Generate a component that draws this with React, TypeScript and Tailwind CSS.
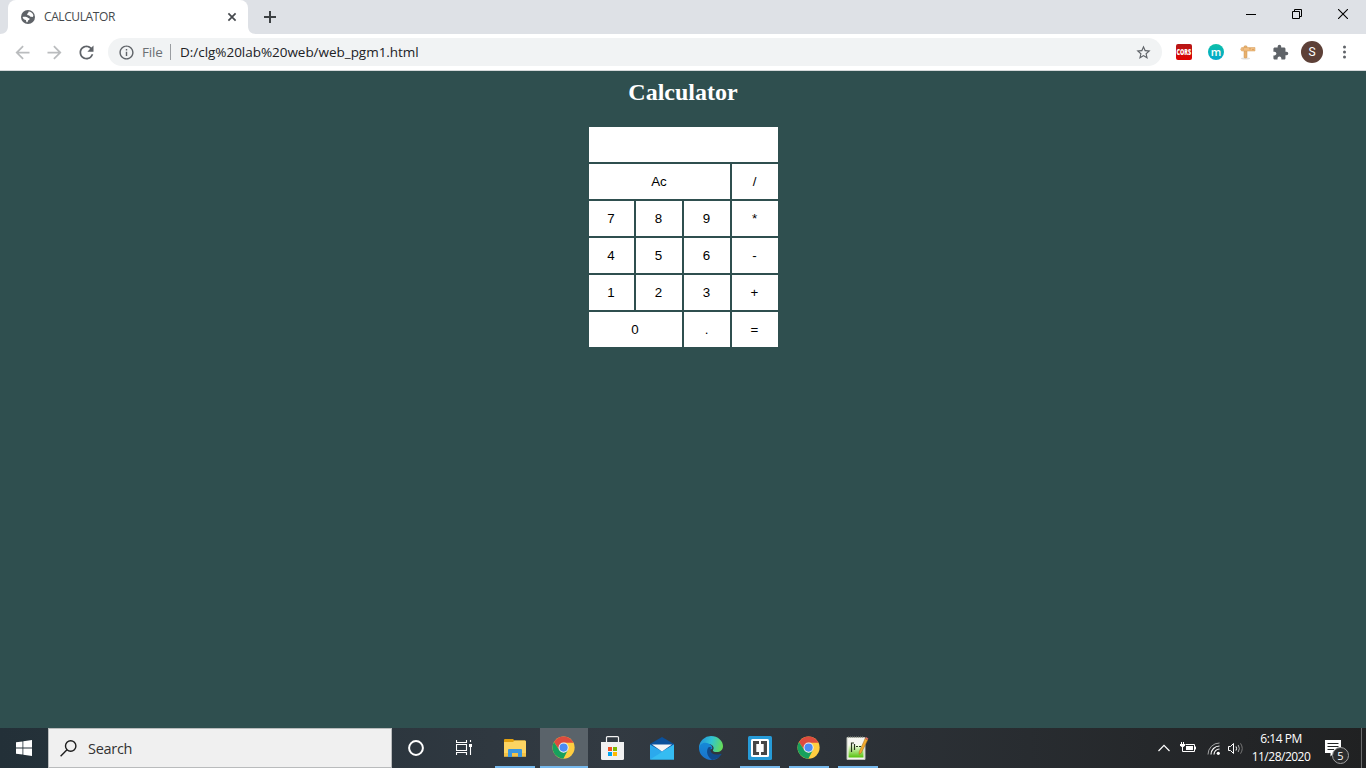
import type { ReactNode } from "react";
import { MdArrowBack, MdArrowForward, MdExtension, MdOutlineInfo, MdRefresh, MdStarBorder } from "react-icons/md";

const ui = "font-['Open_Sans','Noto_Sans',sans-serif]";

function Globe() {
  return (
    <svg width="14" height="14" viewBox="0 0 14 14">
      <circle cx="7" cy="7" r="7" fill="#5f6368" />
      <path d="M7.6 1.5 C9.6 1.5 11.6 2.8 12.3 5 C12.4 6 12.2 6.6 11.6 6.9 C10.4 7 9.2 6.8 8.8 6.1 C8.4 5.4 7.8 5.5 7 5.3 C6 5 6 4.2 6.5 3.6 C7 3 7.6 2.5 7.6 1.5Z" fill="#fff" />
      <path d="M1.6 6.9 C3.6 6.5 5.8 6.6 6.6 7.6 C7.2 8.4 8.7 8.1 8.7 9.1 C8.6 10.2 7.2 10 6.9 10.9 C6.8 11.6 6.4 12.3 5.6 12.2 C5 11.7 5.3 10.7 4.8 10.1 C3.7 9.6 1.8 8.9 1.6 6.9Z" fill="#fff" />
    </svg>
  );
}

function TabStrip() {
  return (
    <div className="flex h-[34px] bg-[#dee1e6]">
      <svg width="8" height="34" viewBox="0 0 8 34"><path d="M8 26V34H0C5 34 8 31 8 26Z" fill="#fff" /></svg>
      <div className="flex h-[34px] w-60 items-center rounded-t-lg bg-white pl-[13px] pr-[11px]">
        <Globe />
        <span className={`${ui} ml-[9px] flex-1 text-[12px] leading-4 tracking-[-0.4px] text-[#45494d]`}>CALCULATOR</span>
        <svg width="10" height="10" viewBox="0 0 10 10"><path d="M1.4 1.4L8.6 8.6M8.6 1.4L1.4 8.6" stroke="#45494d" strokeWidth="1.7" /></svg>
      </div>
      <svg width="8" height="34" viewBox="0 0 8 34"><path d="M0 26V34H8C3 34 0 31 0 26Z" fill="#fff" /></svg>
      <div className="flex w-7 items-center justify-center">
        <svg width="12" height="12" viewBox="0 0 12 12"><path d="M6 0V12M0 6H12" stroke="#3c4043" strokeWidth="2" /></svg>
      </div>
      <div className="ml-auto flex h-7">
        <div className="flex w-[46px] items-center justify-center">
          <svg width="10" height="10" viewBox="0 0 10 10"><path d="M0 5.5H10" stroke="#000" /></svg>
        </div>
        <div className="flex w-[46px] items-center justify-center">
          <svg width="10" height="10" viewBox="0 0 10 10" fill="none" stroke="#000"><path d="M.5 2.5H7.5V9.5H.5ZM2.5 2.5V.5H9.5V7.5H7.5" /></svg>
        </div>
        <div className="flex w-[46px] items-center justify-center">
          <svg width="10" height="10" viewBox="0 0 10 10"><path d="M0 0L10 10M10 0L0 10" stroke="#000" strokeWidth="1.1" /></svg>
        </div>
      </div>
    </div>
  );
}

function Slot({ children }: { children?: ReactNode }) {
  return <div className="flex w-8 items-center justify-center">{children}</div>;
}

function Toolbar() {
  return (
    <div className="flex h-[37px] border-b border-[#d5d8da] bg-white pl-[6px] pr-[6px]">
      <Slot><MdArrowBack size={21} color="#babcbe" /></Slot>
      <Slot><MdArrowForward size={21} color="#babcbe" /></Slot>
      <Slot><MdRefresh size={21} color="#5f6368" /></Slot>
      <div className={`${ui} ml-[6px] mt-1 flex h-7 flex-1 items-center rounded-full bg-[#f1f3f4] pl-[10px] pr-[10px] text-[13.5px]`}>
        <MdOutlineInfo size={17} color="#5f6368" />
        <span className="ml-[7px] w-[28px] tracking-[-0.2px] text-[#6b6f73]">File</span>
        <span className="h-4 w-px bg-[#9a9da1]" />
        <span className="ml-[9px] flex-1 pt-px tracking-[-0.03px] text-[#202124]">D:/clg%20lab%20web/web_pgm1.html</span>
        <MdStarBorder size={17} color="#5f6368" />
      </div>
      <div className="ml-[6px] flex">
        <Slot>
          <div className="flex h-4 w-4 items-center justify-center rounded-[2px] bg-linear-to-b from-[#b51616] to-[#e00000]">
            <span className="scale-x-[0.68] font-['Open_Sans',sans-serif] text-[8px] leading-none font-extrabold text-white">CORS</span>
          </div>
        </Slot>
        <Slot>
          <div className="flex h-4 w-4 items-center justify-center rounded-full bg-linear-to-b from-[#0fbfa6] to-[#08a8cc]">
            <span className="pb-[2px] font-['Open_Sans',sans-serif] text-[11px] leading-none font-semibold text-white">m</span>
          </div>
        </Slot>
        <Slot>
          <svg width="16" height="16" viewBox="0 0 16 16">
            <ellipse cx="5.5" cy="14.4" rx="4.5" ry="1" fill="#e2e0dd" />
            <path d="M4 2.2Q5.5 1.2 7 2.2V13.5Q5.5 14.5 4 13.5Z" fill="#e7b06d" stroke="#cf9550" strokeWidth=".5" />
            <path d="M1.6 3.5H15V7H1.6L.8 5.2Z" fill="#f1bd80" stroke="#d59c58" strokeWidth=".5" />
            <path d="M9 4.8H11M12 5.6H14M2.5 5H4" stroke="#c68d4c" strokeWidth=".6" />
          </svg>
        </Slot>
        <Slot><MdExtension size={17} color="#5f6368" /></Slot>
        <Slot>
          <div className="flex h-[22px] w-[22px] shrink-0 items-center justify-center rounded-full bg-[#5d4037]">
            <span className="font-[Roboto,sans-serif] text-[12px] leading-none text-white">S</span>
          </div>
        </Slot>
        <Slot>
          <svg width="4" height="14" viewBox="0 0 4 14" fill="#5f6368"><circle cx="2.5" cy="2" r="1.5" /><circle cx="2.5" cy="7" r="1.5" /><circle cx="2.5" cy="12" r="1.5" /></svg>
        </Slot>
      </div>
    </div>
  );
}

const keys: { label: string; span?: string }[] = [
  { label: "Ac", span: "col-span-3" },
  { label: "/" },
  { label: "7" }, { label: "8" }, { label: "9" }, { label: "*" },
  { label: "4" }, { label: "5" }, { label: "6" }, { label: "-" },
  { label: "1" }, { label: "2" }, { label: "3" }, { label: "+" },
  { label: "0", span: "col-span-2" },
  { label: "." },
  { label: "=" },
];

function Calculator() {
  return (
    <main className="flex flex-1 flex-col items-center bg-[#2f4f4f]">
      <h1 className="mt-[7px] font-['Liberation_Serif',serif] text-2xl leading-7 font-bold text-white">Calculator</h1>
      <div className="mt-[21px] ml-px grid auto-rows-[35px] grid-cols-[45px_46px_46px_46px] gap-[2px]">
        <input className="col-span-4 min-w-0 bg-white px-2 outline-none" readOnly />
        {keys.map((k) => (
          <button key={k.label} className={`${k.span ?? ""} bg-white pr-px font-['Liberation_Sans',sans-serif] text-[13.333px] text-black`}>
            {k.label}
          </button>
        ))}
      </div>
    </main>
  );
}

function ChromeLogo() {
  return (
    <svg width="24" height="24" viewBox="-0.6 -0.6 51 51">
      <circle cx="24" cy="24" r="23.5" fill="#ffcd40" />
      <path d="M3.6 12.2A23.5 23.5 0 0 1 44.4 12.2L45 13.5H24L14.7 29.3Z" fill="#dd4b3e" />
      <path d="M3.6 12.2L14.7 29.3L24 34.5L33.3 29.4L23.5 47.5A23.5 23.5 0 0 1 3.6 12.2Z" fill="#17a05d" />
      <circle cx="24" cy="24" r="10.8" fill="#f1f1f1" />
      <circle cx="24" cy="24" r="8.7" fill="#4c8bf5" />
    </svg>
  );
}

function FolderIcon() {
  return (
    <svg width="22" height="18" viewBox="0 0 22 18">
      <path d="M0 1Q0 0 1 0H9L10.5 1.5H21V4H0Z" fill="#e2a00f" />
      <path d="M0 3H9L10.5 1.5H21Q22 1.5 22 2.5V17.5H0Z" fill="#fcd462" />
      <path d="M0 14H22V17.5H0Z" fill="#f5c344" />
      <path d="M4 18V11Q4 10 5 10H17Q18 10 18 11V18H14V14H8V18Z" fill="#3c97dd" />
    </svg>
  );
}

function StoreIcon() {
  return (
    <svg width="24" height="24" viewBox="0 0 24 24">
      <path d="M5.5 7V1.6Q5.5 .6 6.5 .6H16.5Q17.5 .6 17.5 1.6V7" fill="none" stroke="#f2f2f2" strokeWidth="1.2" />
      <path d="M0 6H23V22.5Q23 24 21.5 24H1.5Q0 24 0 22.5Z" fill="#f1f1f1" />
      <path d="M7 11H11V15H7Z" fill="#f25022" /><path d="M12 11H16V15H12Z" fill="#7fba00" />
      <path d="M7 16H11V20H7Z" fill="#00a4ef" /><path d="M12 16H16V20H12Z" fill="#ffb900" />
    </svg>
  );
}

function MailIcon() {
  return (
    <svg width="24" height="23" viewBox="0 0 24 23">
      <path d="M0 7L12 0L24 7V15H0Z" fill="#0b519b" />
      <path d="M0 7.5L12 14.5L24 7.5V22.5H0Z" fill="#2ba9ed" />
      <path d="M0 22.5L24 7.5V22.5Z" fill="#35bcf2" />
      <path d="M2 7.5H22L12 14.5Z" fill="#f5f6f7" />
    </svg>
  );
}

function EdgeIcon() {
  return (
    <svg width="24" height="24" viewBox="0 0 24 24">
      <defs>
        <linearGradient id="edgeTop" x1="0" y1=".3" x2="1" y2=".5"><stop stopColor="#2391dc" /><stop offset=".5" stopColor="#31c4d2" /><stop offset="1" stopColor="#66dc58" /></linearGradient>
        <linearGradient id="edgeLeft" x1="0" y1="0" x2="0" y2="1"><stop stopColor="#1589d7" /><stop offset="1" stopColor="#1b72cb" /></linearGradient>
      </defs>
      <path d="M0 11A12 12 0 0 1 12 0C19 0 24 5 24 10C24 14 21 16 18 16C15 16 13.5 15 14 14C16 11 13 8 9 8C5 8 1 10 0 14Z" fill="url(#edgeTop)" />
      <path d="M0 12C1 7 6 6 9.5 7.5C13 9 14 11.5 13 13C10 13 8.8 15.8 11 19C13 22 17 22 20 21C17 24 12 24.8 8 23.2C3 21 0 17 0 12Z" fill="url(#edgeLeft)" />
      <path d="M9.2 11.5C6.5 16 9 21.3 13 23.9C17 23.7 20.5 21.5 22.5 18.3C22.8 17.7 22.3 17.5 21.8 17.7C17 19.8 12 18 11.4 14.5C11.2 13.3 11.7 12.2 12.5 11.5C11.5 10.8 10 10.6 9.2 11.5Z" fill="#114a8b" />
    </svg>
  );
}

function BracketsIcon() {
  return (
    <svg width="24" height="24" viewBox="0 0 24 24">
      <rect width="24" height="24" rx="1.5" fill="#269bd8" />
      <rect x="3" y="3" width="18" height="18" rx="1.5" fill="#fff" />
      <path d="M5 5H11V8H8.3V16H11V19H5ZM13 5H19V19H13V16H15.7V8H13Z" fill="#474747" />
    </svg>
  );
}

function NotepadIcon() {
  return (
    <svg width="24" height="24" viewBox="0 0 24 24">
      <defs><linearGradient id="pad" x1="0" y1="0" x2="0" y2="1"><stop stopColor="#f5ffe4" /><stop offset="1" stopColor="#55c20b" /></linearGradient></defs>
      <path d="M1 1.5H19V23.5H1Z" fill="#f6f6f0" stroke="#bdc1b8" />
      <path d="M2.5 9H17.5V21.5H2.5Z" fill="url(#pad)" />
      <path d="M2 1.2H18" stroke="#8a8f86" strokeWidth="1.2" strokeDasharray="1 1" />
      <path d="M5.5 6.5V16M6 7H8M8.5 8V14M10 10.5H12M13 10.5H15" stroke="#26351c" strokeWidth="1.2" />
      <path d="M19.2 2.5L21.7 4L15.2 17L13.2 18.3V15.8Z" fill="#f2aa2e" stroke="#a36b16" strokeWidth=".5" />
      <path d="M19.2 2.5L20 1.1L22.3 2.4L21.7 4Z" fill="#e26f62" />
    </svg>
  );
}

function TaskViewIcon() {
  return (
    <svg width="16" height="16" viewBox="0 0 16 16" fill="none" stroke="#fff">
      <path d="M.5 0V2.5H10.5V0M.5 15V12.5H10.5V15M.5 4.5H10.5V10.5H.5ZM14.5 0V2M14.5 7V15" strokeWidth="1.1" />
      <path d="M13 4H16V7H13Z" fill="#fff" stroke="none" />
    </svg>
  );
}

function Task({ children, state }: { children: ReactNode; state?: "open" | "active" }) {
  return (
    <div className={`flex h-10 w-12 flex-col items-center ${state === "active" ? "bg-[#5a636a]" : ""}`}>
      <div className="flex h-[38px] items-center pt-[2px]">{children}</div>
      {state && <div className={`h-[2px] bg-[#76b9ed] ${state === "active" ? "w-12" : "w-10"}`} />}
    </div>
  );
}

function Taskbar() {
  return (
    <footer className={`${ui} flex h-10 bg-linear-to-r from-[#233038] via-[#323a42] via-45% to-[#202122]`}>
      <div className="flex w-12 items-center justify-center">
        <svg width="16" height="16" viewBox="0 0 16 16" fill="#fff"><path d="M0 2.3L6.5 1.4V7.5H0ZM7.3 1.2L16 0V7.5H7.3ZM0 8.4H6.5V14.6L0 13.7ZM7.3 8.4H16V16L7.3 14.8Z" /></svg>
      </div>
      <div className="flex w-[344px] items-center border border-[#b9bbbc] bg-[#f0f0f0] pl-[11px]">
        <svg width="17" height="17" viewBox="0 0 17 17" fill="none" stroke="#1d1d1d" strokeWidth="1.4"><circle cx="10.7" cy="6" r="5.2" /><path d="M7 9.7L.6 16.2" /></svg>
        <span className="ml-[11px] pt-px text-[14.5px] tracking-[-0.3px] text-[#333]">Search</span>
      </div>
      <Task><svg width="16" height="16" viewBox="0 0 16 16"><circle cx="8" cy="8" r="6.9" fill="none" stroke="#fff" strokeWidth="2" /></svg></Task>
      <Task><TaskViewIcon /></Task>
      <div className="ml-[3px] flex gap-px">
        <Task state="open"><FolderIcon /></Task>
        <Task state="active"><ChromeLogo /></Task>
        <Task><StoreIcon /></Task>
        <Task><MailIcon /></Task>
        <Task><EdgeIcon /></Task>
        <Task state="open"><BracketsIcon /></Task>
        <Task state="open"><ChromeLogo /></Task>
        <Task state="open"><NotepadIcon /></Task>
      </div>
      <div className="ml-auto flex items-center">
        <svg className="mr-[10px]" width="12" height="8" viewBox="0 0 12 8"><path d="M.5 7L6 1.3L11.5 7" fill="none" stroke="#fff" strokeWidth="1.2" /></svg>
        <svg className="mr-[11px]" width="16" height="12" viewBox="0 0 16 12">
          <path d="M5.5 2.5H14.5V9.5H5M15.5 4.5V7.5" fill="none" stroke="#fff" />
          <path d="M6 4H13V8H6Z" fill="#fff" />
          <path d="M1.5 0V2M3.5 0V2M2.5 4V9.5H5" fill="none" stroke="#fff" />
          <path d="M0 2H5V3.5L3.5 5H1.5L0 3.5Z" fill="#fff" />
        </svg>
        <svg className="mr-[8px]" width="13" height="13" viewBox="0 0 13 13" fill="none">
          <path d="M1 12.5A11.5 11.5 0 0 1 12.5 1" stroke="#a5a6a7" />
          <path d="M4 12.5A8.5 8.5 0 0 1 12.5 4M7 12.5A5.5 5.5 0 0 1 12.5 7" stroke="#fff" strokeWidth="1.1" />
          <circle cx="11.3" cy="11.3" r="1.6" fill="#fff" />
        </svg>
        <svg className="mr-[6px]" width="17" height="13" viewBox="0 0 17 13" fill="none" stroke="#fff">
          <path d="M.5 4.5H2.5L5.5 1.5V11.5L2.5 8.5H.5Z" /><path d="M8 4.5Q9.2 6.5 8 8.5" />
          <path d="M10.2 3Q12.5 6.5 10.2 10" stroke="#aaa" /><path d="M12.5 1.3Q16 6.5 12.5 11.7" stroke="#777" />
        </svg>
        <div className="w-[60px] text-center text-[12px] leading-[18px] tracking-[-0.5px] whitespace-nowrap text-white">
          <div>6:14 PM</div>
          <div>11/28/2020</div>
        </div>
        <div className="relative mt-2 ml-[14px] h-6 w-6">
          <svg width="17" height="17" viewBox="0 0 17 17"><path d="M0 0H16V13H9L5.5 16.5V13H0Z" fill="#fff" /><path d="M2.5 3.5H13.5M2.5 6.5H13.5M2.5 9.5H9" stroke="#222425" /></svg>
          <div className="absolute top-[7px] left-[7px] flex h-[17px] w-[17px] items-center justify-center rounded-full border border-[#a0a0a0] bg-[#2c2d2e] text-[11px] leading-none text-white">5</div>
        </div>
        <div className="mr-1 ml-[12px] h-10 w-px bg-[#6b6c6d]" />
      </div>
    </footer>
  );
}

export default function App() {
  return (
    <div className="flex h-[768px] w-[1366px] flex-col overflow-hidden">
      <TabStrip />
      <Toolbar />
      <Calculator />
      <Taskbar />
    </div>
  );
}
